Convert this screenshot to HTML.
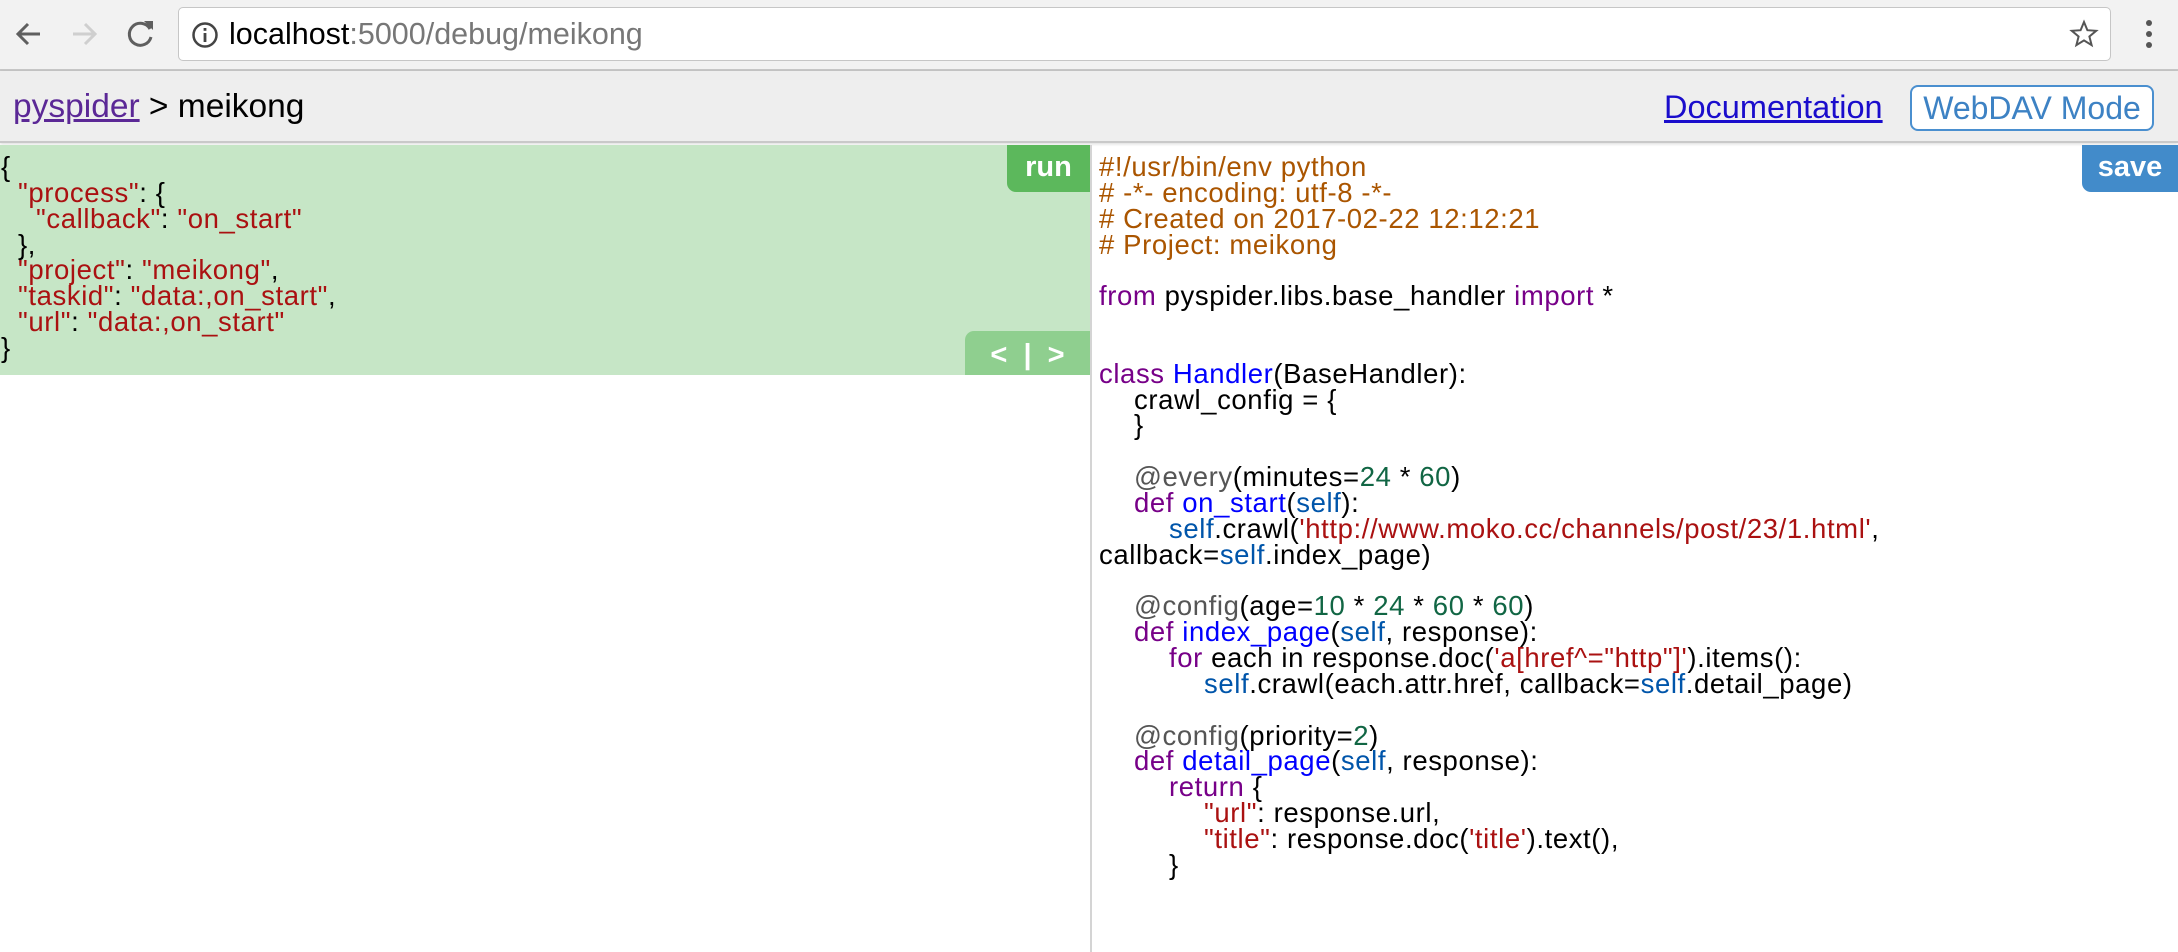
<!DOCTYPE html>
<html><head><meta charset="utf-8"><style>
*{margin:0;padding:0;box-sizing:border-box}
body{width:2178px;height:952px;overflow:hidden;background:#fff;font-family:"Liberation Sans",Helvetica,Arial,sans-serif;position:relative}
.tb{position:absolute;left:0;top:0;width:2178px;height:71px;background:#f2f2f2;border-bottom:2px solid #c8c8c8}
.addr{position:absolute;left:178px;top:7px;width:1933px;height:54px;background:#fff;border:1.5px solid #c6c6c6;border-radius:5px}
.url{position:absolute;left:229px;top:15px;font-size:30.5px;line-height:38px;color:#000;white-space:pre}
.url span{color:#777}
.hd{position:absolute;left:0;top:71px;width:2178px;height:72px;background:#eeeeee;border-bottom:2px solid #c9c9c9;box-shadow:0 1px 3px rgba(0,0,0,.15)}
.crumb{position:absolute;left:13px;top:88px;font-size:33.5px;line-height:38px;white-space:pre}
.crumb a{color:#5b2896;text-decoration:underline}
.doc{position:absolute;left:1664px;top:88px;font-size:32.5px;line-height:38px;color:#1a0dcc;text-decoration:underline}
.dav{position:absolute;left:1910px;top:85px;width:244px;height:46px;border:2px solid #4a8fcf;border-radius:8px;color:#3d82c4;font-size:32px;line-height:42px;text-align:center;background:#fff}
.green{position:absolute;left:0;top:145px;width:1090px;height:230px;background:#c6e6c6}
.run{position:absolute;left:1007px;top:145px;width:83px;height:47px;background:#5cb85c;border-bottom-left-radius:9px;color:#fff;font-weight:bold;font-size:29px;line-height:44px;text-align:center}
.nav{position:absolute;left:965px;top:331px;width:125px;height:44px;background:#8fcf8f;border-top-left-radius:9px;color:#fff;font-weight:bold;font-size:29px;line-height:48px;white-space:pre;text-align:center}
.save{position:absolute;left:2082px;top:145px;width:96px;height:47px;background:#428bca;border-bottom-left-radius:9px;color:#fff;font-weight:bold;font-size:29px;line-height:44px;text-align:center}
.div{position:absolute;left:1090px;top:145px;width:2px;height:807px;background:#d4d4d4}
.code{position:absolute;top:154px;font-size:27.5px;letter-spacing:0.6px;line-height:25.85px;color:#000}
.code div{height:25.85px;white-space:pre}
.cm{color:#a50}.kw{color:#708}.df{color:#00f}.v2{color:#05a}.nu{color:#164}.st{color:#a11}.mt{color:#555}
</style></head><body>
<div class="tb">
<svg style="position:absolute;left:12px;top:17px" width="34" height="34" viewBox="0 0 34 34"><path d="M28 17H7M16 7L6 17l10 10" stroke="#5f5f5f" stroke-width="3" fill="none"/></svg>
<svg style="position:absolute;left:67px;top:17px" width="34" height="34" viewBox="0 0 34 34"><path d="M6 17h21M18 7l10 10-10 10" stroke="#cfcfcf" stroke-width="3" fill="none"/></svg>
<svg style="position:absolute;left:124px;top:17px" width="34" height="34" viewBox="0 0 34 34"><path d="M26 12A11 11 0 1 0 27 20" stroke="#5f5f5f" stroke-width="3" fill="none"/><path d="M20 4h9v9z" fill="#5f5f5f"/></svg>
<div class="addr"></div>
<svg style="position:absolute;left:191px;top:21px" width="28" height="28" viewBox="0 0 28 28"><circle cx="14" cy="14" r="11.5" stroke="#444" stroke-width="2.5" fill="none"/><rect x="12.6" y="12" width="2.8" height="9" fill="#444"/><rect x="12.6" y="7" width="2.8" height="2.8" fill="#444"/></svg>
<div class="url">localhost<span>:5000/debug/meikong</span></div>
<svg style="position:absolute;left:2069px;top:19px" width="30" height="30" viewBox="0 0 30 30"><path d="M15 3l3.4 8.2 8.8.6-6.8 5.7 2.2 8.6L15 21.4 7.4 26.1l2.2-8.6-6.8-5.7 8.8-.6z" stroke="#555" stroke-width="2" fill="none"/></svg>
<svg style="position:absolute;left:2141px;top:18px" width="16" height="34" viewBox="0 0 16 34"><circle cx="8" cy="5" r="3" fill="#555"/><circle cx="8" cy="16" r="3" fill="#555"/><circle cx="8" cy="27" r="3" fill="#555"/></svg>
</div>
<div class="hd"></div>
<div class="crumb"><a>pyspider</a> &gt; meikong</div>
<div class="doc">Documentation</div>
<div class="dav">WebDAV Mode</div>
<div class="green"></div>
<div class="code" style="left:1px"><div>{</div><div style="padding-left:17px"><span class="st">"process"</span>: {</div><div style="padding-left:35px"><span class="st">"callback"</span>: <span class="st">"on_start"</span></div><div style="padding-left:17px">},</div><div style="padding-left:17px"><span class="st">"project"</span>: <span class="st">"meikong"</span>,</div><div style="padding-left:17px"><span class="st">"taskid"</span>: <span class="st">"data:,on_start"</span>,</div><div style="padding-left:17px"><span class="st">"url"</span>: <span class="st">"data:,on_start"</span></div><div>}</div></div>
<div class="run">run</div>
<div class="nav">&lt;  |  &gt;</div>
<div class="div"></div>
<div class="code" style="left:1099px"><div class="cm">#!/usr/bin/env python</div><div class="cm"># -*- encoding: utf-8 -*-</div><div class="cm"># Created on 2017-02-22 12:12:21</div><div class="cm"># Project: meikong</div><div></div><div><span class="kw">from</span> pyspider.libs.base_handler <span class="kw">import</span> *</div><div></div><div></div><div><span class="kw">class</span> <span class="df">Handler</span>(BaseHandler):</div><div style="padding-left:35px">crawl_config = {</div><div style="padding-left:35px">}</div><div></div><div style="padding-left:35px"><span class="mt">@every</span>(minutes=<span class="nu">24</span> * <span class="nu">60</span>)</div><div style="padding-left:35px"><span class="kw">def</span> <span class="df">on_start</span>(<span class="v2">self</span>):</div><div style="padding-left:70px"><span class="v2">self</span>.crawl(<span class="st">'http://www.moko.cc/channels/post/23/1.html'</span>,</div><div>callback=<span class="v2">self</span>.index_page)</div><div></div><div style="padding-left:35px"><span class="mt">@config</span>(age=<span class="nu">10</span> * <span class="nu">24</span> * <span class="nu">60</span> * <span class="nu">60</span>)</div><div style="padding-left:35px"><span class="kw">def</span> <span class="df">index_page</span>(<span class="v2">self</span>, response):</div><div style="padding-left:70px"><span class="kw">for</span> each in response.doc(<span class="st">'a[href^="http"]'</span>).items():</div><div style="padding-left:105px"><span class="v2">self</span>.crawl(each.attr.href, callback=<span class="v2">self</span>.detail_page)</div><div></div><div style="padding-left:35px"><span class="mt">@config</span>(priority=<span class="nu">2</span>)</div><div style="padding-left:35px"><span class="kw">def</span> <span class="df">detail_page</span>(<span class="v2">self</span>, response):</div><div style="padding-left:70px"><span class="kw">return</span> {</div><div style="padding-left:105px"><span class="st">"url"</span>: response.url,</div><div style="padding-left:105px"><span class="st">"title"</span>: response.doc(<span class="st">'title'</span>).text(),</div><div style="padding-left:70px">}</div></div>
<div class="save">save</div>
</body></html>
